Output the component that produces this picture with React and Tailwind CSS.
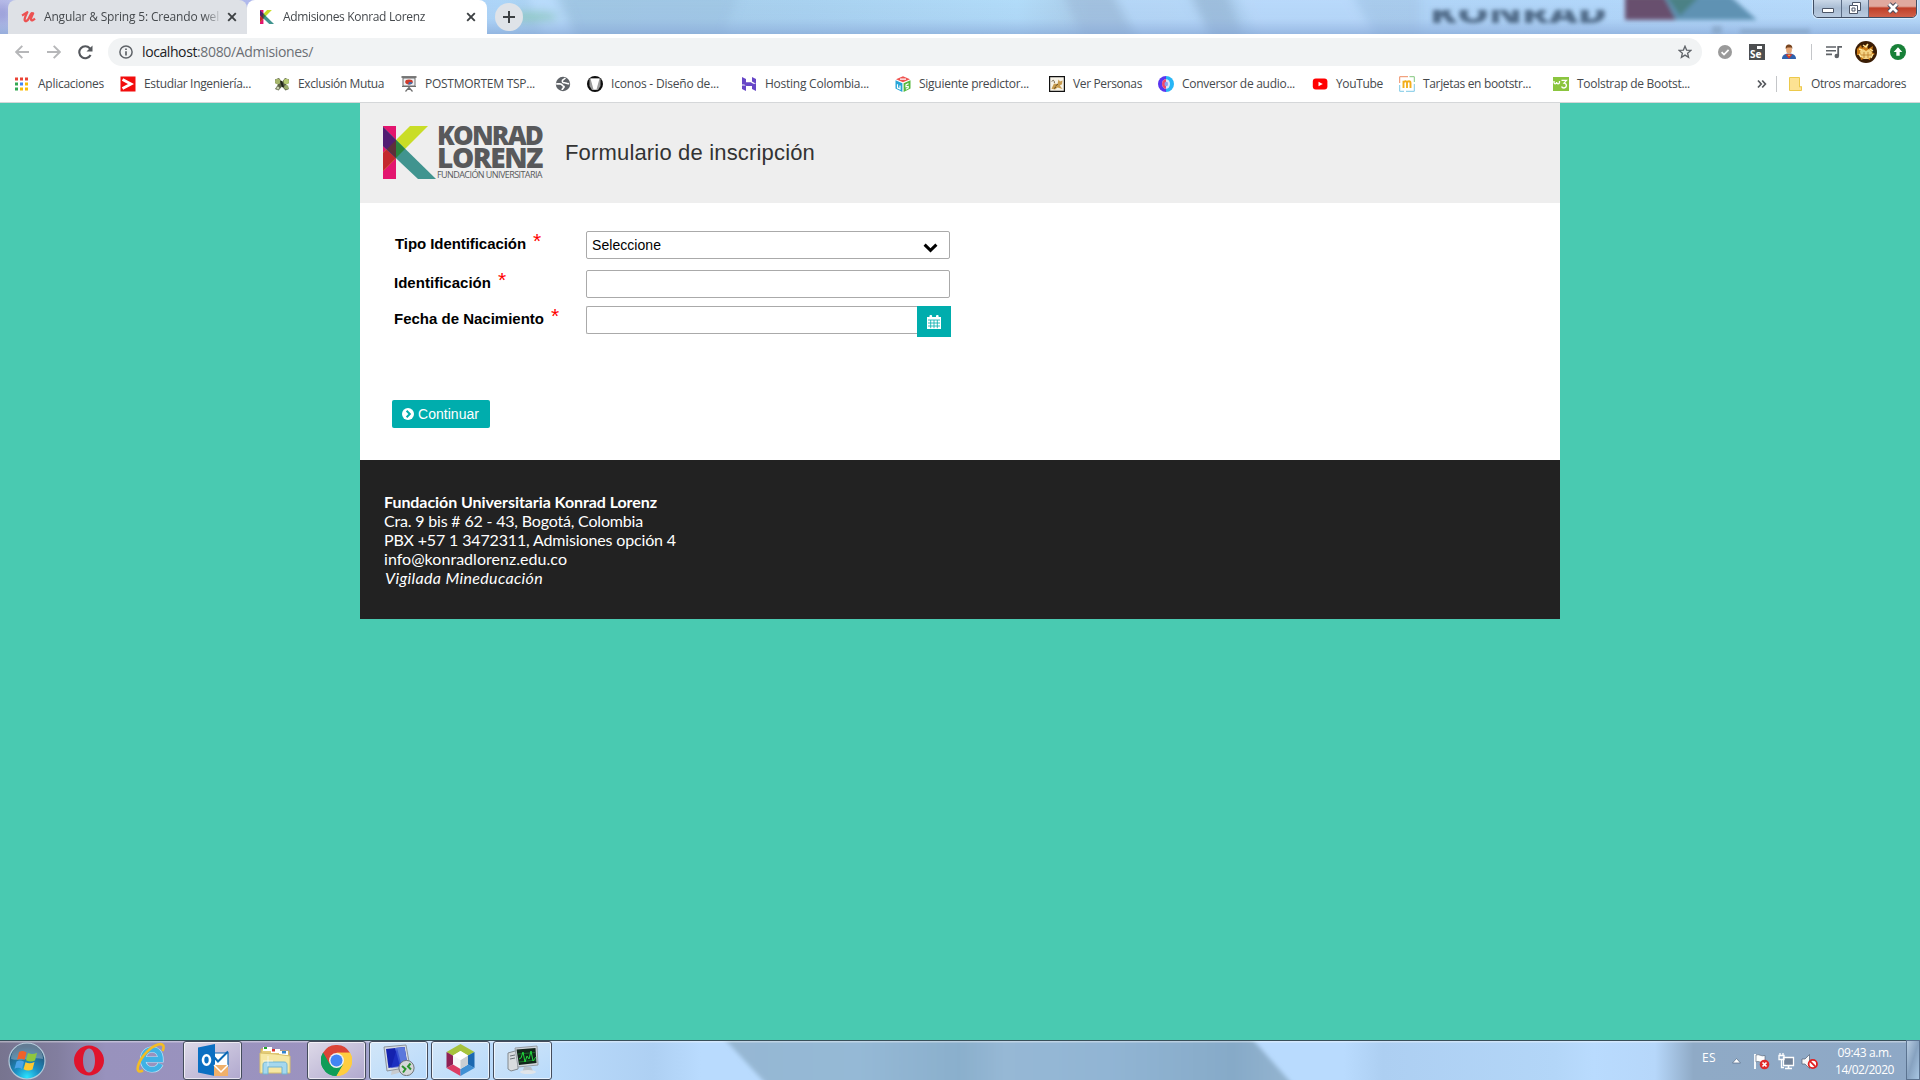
import { useLayoutEffect, useRef } from "react";

// Text set to an exact width by spreading the difference over its letters.
function Fit({ w, className = "", children }) {
  const ref = useRef(null);
  useLayoutEffect(() => {
    const el = ref.current;
    el.style.letterSpacing = "0px";
    const natural = el.getBoundingClientRect().width;
    el.style.letterSpacing = `${(w - natural) / el.textContent.length}px`;
  }, [w]);
  return (
    <span ref={ref} className={`inline-block self-auto whitespace-pre ${className}`}>
      {children}
    </span>
  );
}

function Svg({ s = 16, w, h, vb = "0 0 16 16", className = "", children }) {
  return (
    <svg width={w || s} height={h || s} viewBox={vb} className={`block shrink-0 ${className}`} fill="none">
      {children}
    </svg>
  );
}

const KMark = ({ w, h, className = "" }) => (
  <Svg w={w} h={h} vb="0 0 53 53" className={className}>
    <path d="M0 0H13V53H0Z" fill="#e3156f" />
    <path d="M27 0H45L13 32 0 45V27Z" fill="#c9dd27" />
    <path d="M0 27 13 14V32L0 45Z" fill="#c4282d" />
    <path d="M0 1V20L35 53H53Z" fill="#40948f" />
    <path d="M0 1V20L13 32V14Z" fill="#511c72" />
    <path d="M13 14 22 23 13 32Z" fill="#2b843f" />
    <path d="M13 14V32L4 23Z" fill="#5d3039" />
  </Svg>
);

function TitleBackdrop() {
  return (
    <svg className="absolute inset-0 block" width="1920" height="34" viewBox="0 0 1920 34" preserveAspectRatio="none">
      <defs>
        <linearGradient id="glass" x1="0" x2="1">
          <stop offset="0" stopColor="#b9bde8" />
          <stop offset="0.03" stopColor="#b4c8f2" />
          <stop offset="0.13" stopColor="#b0b9ec" />
          <stop offset="0.26" stopColor="#aed6f8" />
          <stop offset="0.3" stopColor="#a6cbe6" />
          <stop offset="0.42" stopColor="#a9d2f0" />
          <stop offset="0.53" stopColor="#b2dcf9" />
          <stop offset="0.57" stopColor="#abcbe6" />
          <stop offset="0.66" stopColor="#b0d3f4" />
          <stop offset="0.83" stopColor="#b2d7fa" />
          <stop offset="1" stopColor="#b9dcfb" />
        </linearGradient>
        <linearGradient id="fall" x1="0" x2="0" y1="0" y2="1">
          <stop offset="0" stopColor="#8faede" stopOpacity="0" />
          <stop offset="0.55" stopColor="#8faede" stopOpacity="0.1" />
          <stop offset="1" stopColor="#84a5d4" stopOpacity="0.65" />
        </linearGradient>
        <filter id="soft" x="-20%" y="-50%" width="140%" height="200%"><feGaussianBlur stdDeviation="5" /></filter>
        <filter id="soft2" x="-20%" y="-50%" width="140%" height="200%"><feGaussianBlur stdDeviation="2" /></filter>
      </defs>
      <rect width="1920" height="34" fill="url(#glass)" />
      <g filter="url(#soft)">
        <path d="M560 -9H740L720 44H580Z" fill="#9ec5e2" opacity=".7" />
        <path d="M552 -9 578 44H545L525 -9Z" fill="#b9dcfb" />
        <path d="M1062 -9H1112L1140 44H1085Z" fill="#9fbedc" opacity=".75" />
        <path d="M1112 -9H1185L1215 44H1140Z" fill="#b8dafa" opacity=".8" />
        <path d="M1190 -9H1226L1246 44H1212Z" fill="#9bbbd9" opacity=".85" />
        <path d="M1236 -9H1348L1378 44H1260Z" fill="#bbdbfb" opacity=".85" />
        <path d="M1352 -9H1420V44H1380Z" fill="#a5c8e8" opacity=".7" />
        <ellipse cx="532" cy="17" rx="26" ry="5" fill="#8fcac0" />
        <ellipse cx="2" cy="14" rx="8" ry="9" fill="#9b9dd8" />
      </g>
      <rect width="1920" height="34" fill="url(#fall)" />
      <g filter="url(#soft2)">
        <svg x="1420" y="10" width="200" height="13" viewBox="0 0 200 13">
          <text x="10" y="13" fontFamily="Open Sans, sans-serif" fontWeight="800" fontSize="25" textLength="177" lengthAdjust="spacingAndGlyphs" fill="#506a88">KONRAD</text>
        </svg>
        <path d="M1625 -4H1664L1677 20H1625Z" fill="#68506e" />
        <path d="M1664 -4H1730L1757 20H1676Z" fill="#5e92b3" />
        <path d="M1666 -4H1700L1680 16Z" fill="#4c8185" />
        <path d="M1712 26H1722V34H1712ZM1740 29H1810V34H1740Z" fill="#7f9dbb" opacity=".6" />
      </g>
    </svg>
  );
}

function CloseX({ className = "" }) {
  return (
    <Svg s={10} vb="0 0 10 10" className={className}>
      <path d="M1.2 1.2 8.8 8.8M8.8 1.2 1.2 8.8" stroke="#3c4043" strokeWidth="1.9" />
    </Svg>
  );
}

function WindowButtons() {
  return (
    <div className="absolute right-[3px] top-[-2px] flex h-5 overflow-hidden rounded-b-[5px] border border-[#3f4d63] shadow-[0_0_0_1px_rgba(255,255,255,0.45)]">
      <div className="flex w-7 items-end justify-center border-r border-[#5b6c85] bg-linear-to-b from-[#cfdceb] via-[#a9bcd3] to-[#b9cbe0] pb-[4px]">
        <Svg w={12} h={5} vb="0 0 12 5"><path d="M.5 .5h11v4H.5z" fill="#fff" stroke="#4c5668" /></Svg>
      </div>
      <div className="flex w-[27px] items-center justify-center border-r border-[#5b6c85] bg-linear-to-b from-[#cfdceb] via-[#a9bcd3] to-[#b9cbe0]">
        <Svg s={12} vb="0 0 12 12">
          <path d="M3.5 .5h8v8h-3v3h-8v-8h3z" fill="#fff" stroke="#4c5668" />
          <path d="M3 6h3v3H3zM3.5 3.5H8.5V8.5" stroke="#4c5668" />
        </Svg>
      </div>
      <div className="flex w-[47px] items-center justify-center bg-linear-to-b from-[#e0a99e] from-40% via-[#bf3f28] via-50% to-[#d0604a]">
        <Svg w={14} h={12} vb="0 0 14 12"><path d="M3 2 11 10M11 2 3 10" stroke="#474a5c" strokeWidth="4.6" /><path d="M3 2 11 10M11 2 3 10" stroke="#fff" strokeWidth="2.8" /></Svg>
      </div>
    </div>
  );
}

function TabStrip() {
  return (
    <div className="relative flex h-[34px] overflow-hidden pl-2 font-['Open_Sans','Noto_Sans',sans-serif] text-xs text-[#45494d]">
      <TitleBackdrop />
      <div className="relative flex h-[34px] w-[239px] items-center rounded-t-lg bg-[#dee1e6] pl-[13px]">
        <Svg w={15} h={13} vb="0 0 15 13">
          <path d="M1 4.5C3 3.5 4.5 2 6.3 1.2 5.5 3 3.2 7.5 3.7 9.3c.5 1.7 3 .6 4.2-2C9 5 9.6 3.2 10.6 2.2l1.500.2C11.3 4 9.6 8 10.2 9c.6 1 2.1 0 3.8-1.4" stroke="#ec5252" strokeWidth="2.3" strokeLinejoin="round" />
        </Svg>
        <div className="ml-2 w-[175px] overflow-hidden mask-r-from-91% mask-r-to-102%">
          <Fit w={175}>Angular &amp; Spring 5: Creando wel</Fit>
        </div>
        <CloseX className="ml-2" />
      </div>
      <div className="relative flex h-[34px] w-[240px] items-center rounded-t-lg bg-white pl-[13px]">
        <KMark w={14} h={14} />
        <span className="ml-[9px] w-[183px]"><Fit w={142}>Admisiones Konrad Lorenz</Fit></span>
        <CloseX />
      </div>
      <div className="relative ml-2 mt-[3px] flex size-7 items-center justify-center rounded-full bg-[#dfe3e8]">
        <Svg s={12} vb="0 0 12 12"><path d="M6 0V12M0 6H12" stroke="#3c4043" strokeWidth="2" /></Svg>
      </div>
      <WindowButtons />
    </div>
  );
}

function AddressBar() {
  return (
    <div className="flex h-9 items-center bg-white font-['Open_Sans','Noto_Sans',sans-serif]">
      <Svg s={14} vb="0 0 14 14" className="ml-[15px]"><path d="M14 7H1.5M7.3 .8 1.2 7l6.1 6.2" stroke="#b6b7b9" strokeWidth="1.9" /></Svg>
      <Svg s={14} vb="0 0 14 14" className="ml-[18px]"><path d="M0 7H12.5M6.7 .8 12.8 7l-6.1 6.2" stroke="#b6b7b9" strokeWidth="1.9" /></Svg>
      <Svg s={15} vb="0 0 15 15" className="ml-[17px]"><path d="M12.6 10A6 6 0 1 1 11.8 3.2L13 4.6" stroke="#55585d" strokeWidth="2.1" /><path d="M14.5 .5V6.5H8.5Z" fill="#55585d" /></Svg>
      <div className="ml-[15px] flex h-7 w-[1594px] items-center rounded-full bg-[#f1f3f4] pl-[11px] text-sm">
        <Svg s={14} vb="0 0 14 14"><circle cx="7" cy="7" r="6.1" stroke="#5f6368" strokeWidth="1.5" /><path d="M7 6.2V10.4M7 3.4V5" stroke="#5f6368" strokeWidth="1.7" /></Svg>
        <span className="ml-[9px] flex">
          <Fit w={55} className="text-[#202124]">localhost</Fit>
          <Fit w={116} className="text-[#6b6f74]">:8080/Admisiones/</Fit>
        </span>
        <Svg s={14} vb="0 0 14 14" className="ml-auto mr-[10px]"><path d="M7 1.2 8.6 5.1 12.9 5.4 9.6 8.2 10.6 12.4 7 10.1 3.4 12.4 4.4 8.2 1.1 5.4 5.4 5.1Z" stroke="#5f6368" strokeWidth="1.3" /></Svg>
      </div>
      <Svg s={14} vb="0 0 14 14" className="ml-4"><circle cx="7" cy="7" r="7" fill="#9a9a9a" /><path d="M3.6 7.2 6 9.6 10.6 4.8" stroke="#fff" strokeWidth="1.7" /></Svg>
      <div className="ml-[17px] flex size-4 items-end overflow-hidden bg-[#4c4e50] pl-px font-['Noto_Sans',sans-serif] text-[10px] font-bold leading-[11px] text-white">
        <span className="relative">Se<span className="absolute -top-[3px] left-[7px] h-[3px] w-[5px] bg-white" /></span>
      </div>
      <Svg s={16} className="ml-4">
        <path d="M1 15C1 11 4 9.5 8 9.5S15 11 15 15Z" fill="#2e62ad" />
        <path d="M4.500 10.3H11.5L8 14.8Z" fill="#d9372c" />
        <path d="M7 11.3h2.2" stroke="#f5c63c" />
        <ellipse cx="8" cy="5.8" rx="2.9" ry="4" fill="#e6a778" />
        <path d="M4.8 5C4.3 1.5 6.4.4 8.3.6c2.5.2 3.4 2 2.9 4.4L10.3 3.4 6.4 3.5Z" fill="#77441f" />
      </Svg>
      <span className="ml-[14px] h-4 w-px bg-[#c4c6c9]" />
      <Svg s={16} className="ml-[14px]"><path d="M0 3H10M0 6.7H10M0 10.4H6" stroke="#5f6368" strokeWidth="1.6" /><path d="M12.2 12V2.8H16" stroke="#5f6368" strokeWidth="1.8" /><circle cx="10.8" cy="12" r="2.3" fill="#5f6368" /></Svg>
      <Svg s={22} vb="0 0 22 22" className="ml-[13px]">
        <circle cx="11" cy="11" r="11" fill="#3a1d05" />
        <path d="M2 8 6 4 7 7 12 3 13 8 18 5 17 11 20 13 16 15 15 19 11 17 6 19 5 14 2 14Z" fill="#c87a16" />
        <path d="M5 10 8 8 11 10 14 8 17 11 16 16 13 18H9L6 16Z" fill="#f4d383" />
        <path d="M8 4 11 6 13 3M4 8 7 9M15 8 18 10M4 13 6 16M18 13 16 17" stroke="#ffe9a0" strokeWidth="1.4" />
        <path d="M9 11V17M13 11V17M6 14H16" stroke="#b5731d" strokeWidth=".7" />
      </Svg>
      <Svg s={16} className="ml-[13px]"><circle cx="8" cy="8" r="8" fill="#188038" /><path d="M8 3.2 12.3 8H9.7V11.8H6.3V8H3.7Z" fill="#fff" /></Svg>
    </div>
  );
}

const icons = {
  apps: (
    <Svg>
      {[["#ea4335", "#ea4335", "#ea4335"], ["#34a853", "#4285f4", "#fbbc05"], ["#34a853", "#fbbc05", "#fbbc05"]].map((row, y) =>
        row.map((c, x) => <rect key={`${x}${y}`} x={2 + x * 5} y={1.5 + y * 5} width="3" height="3" fill={c} />)
      )}
    </Svg>
  ),
  red: <Svg><rect x=".5" y=".5" width="15" height="15" fill="#f20d0d" /><path d="M2.5 3.5 11 8 2.5 12.5" stroke="#fff" strokeWidth="2.8" /></Svg>,
  links: (
    <Svg>
      <path d="M1 3.5 5 2 8 6 11 2 15 3.5 15 7 12 8.5 15 13 11.5 14.5 8 10.5 4.5 14.5 1 13 4 8.5 1 7Z" fill="#596045" />
      <circle cx="3.700" cy="5.500" r="2.7" fill="#a6b66b" /><circle cx="12.3" cy="5.500" r="2.7" fill="#b6ca72" />
      <circle cx="12.4" cy="11.3" r="2.2" fill="#9aac6b" /><circle cx="3.900" cy="12" r="1.500" fill="#c9d0b0" /><path d="M7 5 9 11" stroke="#202519" strokeWidth="2" />
    </Svg>
  ),
  board: (
    <Svg>
      <path d="M.5 1h15" stroke="#5b5b5b" strokeWidth="1.6" /><path d="M2 2h12v8H2z" fill="#eef0f2" stroke="#6e6e6e" />
      <ellipse cx="8" cy="6" rx="3.8" ry="2.4" fill="#cf3b2c" /><path d="M8 6 11.8 6.5A4 2.4 0 0 1 7 8.4Z" fill="#3b6fb0" />
      <path d="M8 10V14M8 11.5 4.5 15.5M8 11.5 11.5 15.5M1 10.5H15" stroke="#6e6e6e" strokeWidth="1.2" />
    </Svg>
  ),
  globe: <Svg><circle cx="8" cy="8" r="7.2" fill="#5f6368" /><path d="M10.500 2 7.500 4.300C6.800 6 8 6.800 9.500 6.800 11.500 6.800 11.800 8.300 14.200 7.500" stroke="#fff" strokeWidth="1.500" /><path d="M1.200 7.800H5C7.500 7.800 7.200 10.200 9 10.500 9.200 12 7 12.200 7.200 14" stroke="#fff" strokeWidth="1.700" /></Svg>,
  iconos: <Svg><circle cx="8" cy="8" r="8" fill="#0d0d0d" /><path d="M2.500 2.500H13.500V10L11 14H5L2.500 10Z" fill="#9b9b9b" /><path d="M3.500 2.500H12.500L9.500 13.500H6.500Z" fill="#fff" /></Svg>,
  hosting: <Svg><path d="M1 1 5 3V6.2H9.8L13.5 8.4H1ZM15 15 11 13V10H5.5L2 7.8H15ZM11 1 15 3V7.8L11 5.6ZM1 9.4H5V15L1 13Z" fill="#6747c7" /></Svg>,
  cube: (
    <Svg>
      <path d="M8 .2 15 3.2 8 6.3 1 3.2Z" fill="#ef5350" /><path d="M.5 4.2 7.4 7.2V16L.5 12.6Z" fill="#26a5d8" /><path d="M15.5 4.2 8.6 7.2V16L15.5 12.6Z" fill="#55b83d" />
      <path d="M5 3.2H11M2.5 8.3V11.8L5 13V9.4M13.5 7.6 11 8.8V10.8L13.2 10.4V12L10.8 13.2" stroke="#fff" strokeWidth="1.2" />
    </Svg>
  ),
  cat: <Svg><path d="M.6 .6H15.4V15.4H.6Z" fill="#f7f3e8" stroke="#111" strokeWidth="1.2" /><path d="M2.5 12.8 5 7.5 8.5 8 9.5 3.5 11 5.5 13.5 4.5 13 8.2 10.8 9.5 13.5 13 8.5 11.5 6 13.5Z" fill="#c89c4f" /><path d="M2.8 5.5C4 3.6 5.5 4.2 5.4 7M6.500 10 9 8M5 12.5 7 11" stroke="#4b3b22" strokeWidth=".8" /></Svg>,
  audio: <Svg><path d="M8 0A8 8 0 0 0 8 16Z" fill="#5a35f0" /><path d="M8 0A8 8 0 0 1 8 16Z" fill="#28b6f6" /><ellipse cx="8" cy="8" rx="4" ry="4.8" fill="#d9e6fa" /><path d="M8 3.2A4 4.8 0 0 0 8 12.8Z" fill="#f0476c" /><ellipse cx="8.3" cy="8" rx="1.8" ry="2.3" fill="#8fa0f3" /></Svg>,
  youtube: <Svg><rect x=".8" y="2.6" width="14.6" height="10.8" rx="3" fill="#f00" /><path d="M6.5 5.7 10.8 8 6.5 10.3Z" fill="#fff" /></Svg>,
  m: (
    <Svg>
      <path d="M.7 7V.7H9" stroke="#ee8d62" /><path d="M10.5 .7H15.3V6" stroke="#83c77d" /><path d="M.7 9V15.3H5M7 15.3H15.3V8" stroke="#7cc9e5" />
      <path d="M4.5 12V4.7M4.5 6.5C5.5 4.6 8 4.8 8 6.8V12M8 6.8C8.5 4.8 11.5 4.7 11.5 6.9V12" stroke="#f2ae1c" strokeWidth="1.9" />
    </Svg>
  ),
  w3: <Svg><rect y="1" width="16" height="14" fill="#8bc53f" /><path d="M1 5V6.500C1.200 8.300 3.300 8.200 3.600 6.500V6 6.500C3.900 8.300 6.300 8.200 6.500 6.500V5M8.500 4.300H13.500L11 7.200C14.300 7.200 14 12 11 12 9.500 12 8.800 11.300 8.600 10.500" stroke="#fff" strokeWidth="1.3" /></Svg>,
};

const bookmarks = [
  ["apps", "Aplicaciones", 66, "w-[107px] gap-[9px]"],
  ["red", "Estudiar Ingeniería...", 107, "w-[154px] gap-2"],
  ["links", "Exclusión Mutua", 86, "w-[127px] gap-2"],
  ["board", "POSTMORTEM TSP...", 110, "w-[154px] gap-2"],
  ["globe", "", 0, "w-[32px]"],
  ["iconos", "Iconos - Diseño de...", 108, "w-[154px] gap-2"],
  ["hosting", "Hosting Colombia...", 104, "w-[154px] gap-2"],
  ["cube", "Siguiente predictor...", 110, "w-[154px] gap-2"],
  ["cat", "Ver Personas", 69, "w-[109px] gap-2"],
  ["audio", "Conversor de audio...", 113, "w-[154px] gap-2"],
  ["youtube", "YouTube", 47, "w-[87px] gap-2"],
  ["m", "Tarjetas en bootstr...", 108, "w-[154px] gap-2"],
  ["w3", "Toolstrap de Bootst...", 113, "w-[202px] gap-2"],
];

function BookmarksBar() {
  return (
    <div className="flex h-[33px] items-center border-b border-[#d5d7d9] bg-white pb-[5px] pl-[13px] font-['Open_Sans','Noto_Sans',sans-serif] text-xs text-[#45494d]">
      {bookmarks.map(([icon, label, w, cls]) => (
        <div key={icon} className={`flex shrink-0 items-center ${cls}`}>
          {icons[icon]}
          {label && <Fit w={w}>{label}</Fit>}
        </div>
      ))}
      <Svg s={10} vb="0 0 10 10" className="ml-[2px]"><path d="M1 1.5 4.2 5 1 8.5M5.2 1.5 8.4 5 5.2 8.5" stroke="#55585d" strokeWidth="1.7" /></Svg>
      <span className="ml-[9px] h-4 w-px bg-[#c4c6c9]" />
      <Svg s={16} className="ml-[10px]"><path d="M2.5 1.5H12.5V11L14.5 10.5V14.5H2.5Z" fill="#fde293" stroke="#ecc94b" /></Svg>
      <Fit w={95} className="ml-2">Otros marcadores</Fit>
    </div>
  );
}

function Header() {
  return (
    <header className="flex h-[100px] bg-[#eee] pl-[23px]">
      <KMark w={53} h={53} className="mt-[23px]" />
      <div className="ml-px mt-[21px] flex w-[106px] flex-col items-start font-['Open_Sans',sans-serif] text-[#58595b]">
        <Fit w={105} className="h-[22px] text-[26px] font-extrabold leading-[22px]">KONRAD</Fit>
        <Fit w={105} className="h-[22px] text-[28px] font-extrabold leading-[23px]">LORENZ</Fit>
        <Fit w={105} className="h-[12px] text-[9px] leading-[13px]">FUNDACIÓN UNIVERSITARIA</Fit>
      </div>
      <h1 className="ml-[22px] mt-[35px] font-['Liberation_Sans',sans-serif] text-[22px] leading-[30px] text-[#333]">
        <Fit w={250}>Formulario de inscripción</Fit>
      </h1>
    </header>
  );
}

function Label({ w, children }) {
  return (
    <div className="flex w-[192px] text-[15px] font-bold leading-[18px] text-black">
      <Fit w={w}>{children}</Fit>
      <span className="-mt-[3px] ml-[7px] text-[21px] font-normal text-[#f00]">*</span>
    </div>
  );
}

function Form() {
  return (
    <main className="h-[257px] bg-white pt-7 font-['Liberation_Sans',sans-serif] text-sm text-black">
      <div className="flex h-[39px] pl-[35px]">
        <div className="-mr-px pt-1"><Label w={131}>Tipo Identificación</Label></div>
        <div className="flex h-7 w-[364px] items-center justify-between rounded-xs border border-[#aaa] pl-[5px] pr-[11px]">
          <Fit w={69}>Seleccione</Fit>
          <Svg w={15} h={10} vb="0 0 15 10" className="mt-[5px]"><path d="M1.6 1.6 7.5 7.4 13.4 1.6" stroke="#000" strokeWidth="3" /></Svg>
        </div>
      </div>
      <div className="flex h-9 pl-[34px]">
        <div className="pt-1"><Label w={97}>Identificación</Label></div>
        <div className="h-7 w-[364px] rounded-xs border border-[#aaa]" />
      </div>
      <div className="flex h-[94px] pl-[34px]">
        <div className="pt-1"><Label w={150}>Fecha de Nacimiento</Label></div>
        <div className="h-7 w-[331px] rounded-l-xs border border-r-0 border-[#aaa]" />
        <div className="flex h-[31px] w-[34px] items-center justify-center bg-[#00adad]">
          <Svg w={14} h={14} vb="0 0 14 14" className="mt-px">
            <path d="M0 2H14V14H0Z" fill="#fff" />
            <rect x="2.500" y="0" width="2.6" height="4" rx="1" fill="#fff" /><rect x="9" y="0" width="2.6" height="4" rx="1" fill="#fff" />
            <path d="M1 5H13M1 8H13M1 11H13M3.700 5V13.2M7 5V13.2M10.300 5V13.2" stroke="#00adad" strokeWidth=".8" />
          </Svg>
        </div>
      </div>
      <button className="ml-8 flex h-7 w-[98px] items-center rounded-xs bg-[#00adad] pl-[10px] text-white">
        <Svg s={12} vb="0 0 12 12" className="mr-1"><circle cx="6" cy="6" r="6" fill="#fff" /><path d="M4.6 2.8 7.8 6 4.6 9.2" stroke="#00adad" strokeWidth="2" /></Svg>
        <Fit w={61}>Continuar</Fit>
      </button>
    </main>
  );
}

function Footer() {
  return (
    <footer className="flex h-[159px] flex-col bg-[#222] pl-6 pt-8 font-['Lato',sans-serif] text-base leading-[19px] text-white">
      <p className="h-[19px]"><Fit w={273} className="font-bold">Fundación Universitaria Konrad Lorenz</Fit></p>
      <p className="h-[19px]"><Fit w={259}>Cra. 9 bis # 62 - 43, Bogotá, Colombia</Fit></p>
      <p className="h-[19px]"><Fit w={292}>PBX +57 1 3472311, Admisiones opción 4</Fit></p>
      <p className="h-[19px]"><Fit w={183}>info@konradlorenz.edu.co</Fit></p>
      <p className="h-[19px] pl-px"><Fit w={158} className="italic">Vigilada Mineducación</Fit></p>
    </footer>
  );
}

function TaskbarBackdrop() {
  return (
    <svg className="absolute inset-0 block" width="1920" height="40" viewBox="0 0 1920 40" preserveAspectRatio="none">
      <defs>
        <linearGradient id="bar" gradientUnits="userSpaceOnUse" x1="0" x2="1920" y1="0" y2="0">
          <stop offset="0" stopColor="#77748f" /><stop offset=".03" stopColor="#827e9f" /><stop offset=".055" stopColor="#9892bd" />
          <stop offset=".18" stopColor="#9c93c0" /><stop offset=".19" stopColor="#9c93c0" /><stop offset=".196" stopColor="#b5d5f6" />
          <stop offset=".28" stopColor="#bbdcfc" /><stop offset=".34" stopColor="#aed0f3" /><stop offset=".365" stopColor="#b9dbfe" />
          <stop offset=".7" stopColor="#b9dbfe" /><stop offset=".72" stopColor="#adcff2" /><stop offset=".81" stopColor="#b3d6f8" />
          <stop offset=".83" stopColor="#b9dbfe" /><stop offset=".862" stopColor="#b6d7fa" /><stop offset=".882" stopColor="#8faac6" />
          <stop offset="1" stopColor="#8ea8c6" />
        </linearGradient>
        <linearGradient id="band" gradientUnits="userSpaceOnUse" x1="720" x2="1290" y1="0" y2="0">
          <stop offset="0" stopColor="#96b7d3" /><stop offset=".24" stopColor="#95b9d6" /><stop offset=".42" stopColor="#8aafcc" />
          <stop offset=".5" stopColor="#96b8d5" /><stop offset=".68" stopColor="#91b5d4" /><stop offset=".9" stopColor="#86aac8" /><stop offset="1" stopColor="#94b4d0" />
        </linearGradient>
        <filter id="edge" x="-5%" y="-20%" width="110%" height="140%"><feGaussianBlur stdDeviation="2" /></filter>
      </defs>
      <rect width="1920" height="40" fill="url(#bar)" />
      <path d="M718 -8H1246L1294 46H768Z" fill="url(#band)" filter="url(#edge)" />
      <rect width="1920" height="1" fill="#38505b" />
      <rect y="1" width="1920" height="1.5" fill="#fff" opacity=".4" />
    </svg>
  );
}

const slotIcons = {
  outlook: (
    <Svg w={32} h={32} vb="0 0 32 32">
      <path d="M13 9H31V22H13Z" fill="#fff" stroke="#0c68b5" strokeWidth="1.2" /><path d="M17 13 21 17.500 31 7.500" stroke="#0c68b5" strokeWidth="2" />
      <path d="M1 3.5 18 0V32L1 28.5Z" fill="#0b6fc2" /><ellipse cx="9.5" cy="16" rx="3.5" ry="4.7" stroke="#fff" strokeWidth="2.6" />
      <path d="M17 21H31V32H17Z" fill="#efb06a" /><path d="M17 21 24 28 31 21" stroke="#fff" strokeWidth="1.5" />
    </Svg>
  ),
  folder: (
    <Svg w={34} h={30} vb="0 0 34 30">
      <path d="M3 4H14L16 6H31V27H3Z" fill="#e6cd78" stroke="#c9ad56" />
      <path d="M5 2H14V6H5Z" fill="#fff" /><path d="M6 2H9V4H6Z" fill="#22a52b" /><path d="M13 4H22V8H13Z" fill="#fff" /><path d="M14 4H17V6.5H14Z" fill="#d8352c" /><path d="M21 6H30V10H21Z" fill="#fff" /><path d="M24 6H28V8.5H24Z" fill="#3184ce" />
      <path d="M2 8 17 9 32 11V28H2Z" fill="#f6e7a3" stroke="#d9c16d" />
      <path d="M5 29V20C5 18 6 17 8 17H26C28 17 29 18 29 20V29H24V22H10V29Z" fill="#a5d8ee" stroke="#71b4d3" />
      <path d="M10 11V21M5 16H15" stroke="#fff" strokeWidth=".8" opacity=".8" />
    </Svg>
  ),
  chrome: (
    <Svg s={31} vb="0 0 48 48">
      <path d="M24 24 3.2 12A24 24 0 0 1 44.8 12Z" fill="#db4437" /><path d="M24 24 44.8 12A24 24 0 0 1 24 48Z" fill="#ffcd40" /><path d="M24 24V48A24 24 0 0 1 3.2 12Z" fill="#0f9d58" />
      <path d="M24 12H44.8L34 30Z" fill="#ffcd40" /><path d="M3.2 12 13.6 30 24 13V8Z" fill="#db4437" /><path d="M13.6 30 24 48 34.4 30Z" fill="#0f9d58" /><path d="M34.4 30 24 48A24 24 0 0 0 44.8 12H24Z" fill="#ffcd40" /><path d="M3.2 12 13.6 30 24 48A24 24 0 0 1 3.2 12Z" fill="#0f9d58" />
      <circle cx="24" cy="24" r="11.5" fill="#f1f1f1" /><circle cx="24" cy="24" r="9.3" fill="#4285f4" />
    </Svg>
  ),
  remote: (
    <Svg w={32} h={32} vb="0 0 32 32">
      <path d="M9 25 18 23 19 28 8 31Z" fill="#c8ccd0" /><path d="M1 3 23 1 27 23 4 27Z" fill="#d7dce2" stroke="#8c949d" />
      <path d="M3 5 21.5 3 24.5 20.5 5.5 24Z" fill="#1422ae" /><path d="M12 4 21.5 3 24.5 20.5 17 22Z" fill="#5a78dc" /><path d="M14 4 19 23 8 24Z" fill="#2139cc" opacity=".6" />
      <circle cx="23.5" cy="24" r="7.6" fill="#d5d7d9" stroke="#6f7478" /><path d="M19 22 22.500 25 20 28.500M27.500 19.500 25 22.500 28 25.500" stroke="#2c922f" strokeWidth="2" />
    </Svg>
  ),
  netbeans: (
    <Svg w={29} h={32} vb="0 0 29 32">
      <path d="M14.5 0 28.5 8 21 12 14.5 8.5 7.5 12 .5 8Z" fill="#a6c33d" /><path d="M.5 8 7.5 12V20L.5 24Z" fill="#8f2155" /><path d="M28.5 8 21 12V20L28.5 24Z" fill="#1b69b1" />
      <path d="M.5 24 7.5 20 14.5 24V32Z" fill="#dc3c64" /><path d="M28.5 24 21.5 20 14.5 24V32Z" fill="#3f90d4" />
      <path d="M14.5 7 22 11.5V20.5L14.5 25 7 20.5V11.5Z" fill="#f6f7f7" /><path d="M14.5 16 22 11.5V20.5L14.5 25Z" fill="#c9ced2" /><path d="M14.5 7 22 11.5 14.5 16 7 11.5Z" fill="#fff" />
    </Svg>
  ),
  monitor: (
    <Svg w={32} h={30} vb="0 0 32 30">
      <path d="M1 8 8 6 11 7V24L4 26 1 24Z" fill="#d8dcdf" stroke="#82898f" /><path d="M3 11 8 10M3 14 8 13" stroke="#697077" />
      <path d="M8 3 30 1 31 20 11 22Z" fill="#d2d7dc" stroke="#969da4" /><path d="M9.500 4.500 28.5 3 29.5 18 12 20Z" fill="#12251a" />
      <path d="M12 14 14 13 16 7 18 17 20 11 22 14 24 6 26 16 29 12" stroke="#20d63a" /><path d="M11 9 28 7.500M12 17 29 15" stroke="#20d63a" strokeWidth=".4" />
      <path d="M17 22H24L26 26 15 28Z" fill="#b9c0c7" /><ellipse cx="21" cy="27" rx="8" ry="2" fill="#e0e5ea" />
    </Svg>
  ),
};

function Slot({ warm, children }) {
  return (
    <div
      className={`flex h-[39px] w-[59px] shrink-0 items-center justify-center rounded-[3px] border border-[#444c5c] shadow-[inset_0_0_0_1px_rgba(255,255,255,0.65)] ${
        warm ? "bg-linear-to-br from-[#dedae8] to-[#b0a8ce]" : "bg-linear-to-br from-[#d2e6f8] to-[#b8dafb]"
      }`}
    >
      {children}
    </div>
  );
}

function Taskbar() {
  return (
    <div className="relative flex h-10 items-center">
      <TaskbarBackdrop />
      <div className="relative flex h-full grow items-center">
        <Svg s={38} vb="0 0 38 38" className="ml-2 mt-px">
          <defs>
            <radialGradient id="orb" cx=".5" cy=".95" r=".85"><stop offset="0" stopColor="#2be4ff" /><stop offset=".4" stopColor="#1b8fc4" /><stop offset="1" stopColor="#264a6b" /></radialGradient>
          </defs>
          <circle cx="19" cy="19" r="18" fill="url(#orb)" stroke="#b2c9d9" strokeWidth="1.2" />
          <path d="M3 17A16 16 0 0 1 35 17C25 14 13 20 3 17Z" fill="#fff" opacity=".28" />
          <path d="M11 10C14 8.500 16 9 18.500 10.500L16.500 18C14 16.500 12 16.500 9 17.800Z" fill="#f0612a" />
          <path d="M20 11C23 12.500 26 12.300 29 10.800L27 18.600C24 20 21 19.800 18 18.300Z" fill="#8fc73e" />
          <path d="M8.500 19.500C11 18 13.500 18.300 16 19.800L14 27C11.500 25.500 9 25.500 6.500 26.800Z" fill="#4aa3e8" />
          <path d="M17.500 20.200C20.500 21.600 23 21.500 26.500 20L24.500 27.500C21.500 29 18.500 28.800 15.500 27.300Z" fill="#fdc82f" />
        </Svg>
        <Svg w={30} h={31} vb="0 0 31 31" className="ml-[28px]"><path fillRule="evenodd" d="M15.500 0C24 0 31 7 31 15.500S24 31 15.500 31 0 24 0 15.500 7 0 15.500 0ZM15.500 3.200C11.500 3.200 9.300 9 9.300 15.500S11.500 27.800 15.500 27.800 21.700 22 21.700 15.500 19.500 3.200 15.500 3.200Z" fill="#e0142c" /></Svg>
        <Svg w={30} h={32} vb="0 0 30 32" className="-mt-1 ml-[32px]">
          <path d="M8 17.500H24.500C24.500 10.500 21 7.500 16 7.500S7 11.500 7 17.500 11 27.500 16 27.500C20 27.500 23 25.500 24.500 22" stroke="#b8e6fa" strokeWidth="6.200" />
          <path d="M8 17.500H24.500C24.500 10.500 21 7.500 16 7.500S7 11.500 7 17.500 11 27.500 16 27.500C20 27.500 23 25.500 24.500 22" stroke="#40b2e5" strokeWidth="4.800" />
          <path d="M26.500 9C29 4 27 1 22 2.500 14 5 5 15 2.500 22.500 .5 28 2 31 7 28.500" stroke="#f3bd25" strokeWidth="2.600" />
        </Svg>
        <div className="ml-[17px] flex items-center">
          <Slot warm>{slotIcons.outlook}</Slot>
          <div className="flex w-[65px] justify-center">{slotIcons.folder}</div>
          <div className="flex gap-[3px]">
            <Slot warm>{slotIcons.chrome}</Slot>
            <Slot>{slotIcons.remote}</Slot>
            <Slot>{slotIcons.netbeans}</Slot>
            <Slot>{slotIcons.monitor}</Slot>
          </div>
        </div>
      </div>
      <div className="relative flex h-full items-center font-['Open_Sans','Noto_Sans',sans-serif] text-xs text-white">
        <Fit w={14} className="mb-[4px]">ES</Fit>
        <Svg w={9} h={6} vb="0 0 9 6" className="ml-[16px] mt-0.5"><path d="M4.500 .5 8.500 5H.5Z" fill="#fff" stroke="#536985" strokeWidth=".7" /></Svg>
        <Svg s={17} vb="0 0 17 17" className="ml-[12px] mt-0.5">
          <path d="M2 1V16" stroke="#fff" strokeWidth="1.800" /><path d="M3 2C6 .5 8 4 12 2.500V9C8 11 6 7 3 9Z" fill="#fff" stroke="#536072" strokeWidth=".6" />
          <circle cx="11.500" cy="11.500" r="4.800" fill="#e02b2b" /><path d="M9.500 9.500 13.500 13.500M13.500 9.500 9.500 13.500" stroke="#fff" strokeWidth="1.700" />
        </Svg>
        <Svg w={17} h={17} vb="0 0 17 17" className="ml-2 mt-0.5">
          <path d="M5.500 4.500H15.500V12.500H5.500Z" fill="#73849a" stroke="#fff" strokeWidth="1.300" /><path d="M7 15.500H14M10.500 13V15" stroke="#fff" strokeWidth="1.600" />
          <path d="M1 2.500H6V6.500H1ZM3.500 7V14.500H6M2 0V3M5 0V3" stroke="#fff" strokeWidth="1.300" />
        </Svg>
        <Svg w={17} h={17} vb="0 0 17 17" className="ml-[6px] mt-0.5">
          <path d="M1 6H4L8.500 1.500V15.500L4 11H1Z" fill="#f8f8f8" stroke="#536072" strokeWidth=".7" />
          <circle cx="11.800" cy="11" r="4.200" fill="#fff" stroke="#e02020" strokeWidth="1.800" /><path d="M9 8.200 14.600 13.800" stroke="#e02020" strokeWidth="1.800" />
        </Svg>
        <div className="ml-[14px] flex w-[65px] flex-col items-center pt-[2px] leading-[17px]">
          <Fit w={54}>09:43 a.m.</Fit>
          <Fit w={59}>14/02/2020</Fit>
        </div>
        <div className="ml-[9px] h-full w-[14px] border border-[#5b7390] bg-linear-to-br from-[#b8cde2] via-[#87a2c0] to-[#a9c7e4]" />
      </div>
    </div>
  );
}

export default function App() {
  return (
    <div className="flex h-[1080px] w-[1920px] flex-col overflow-hidden bg-[#49cab1]">
      <TabStrip />
      <AddressBar />
      <BookmarksBar />
      <div className="mx-auto w-[1200px] grow">
        <Header />
        <Form />
        <Footer />
      </div>
      <Taskbar />
    </div>
  );
}
